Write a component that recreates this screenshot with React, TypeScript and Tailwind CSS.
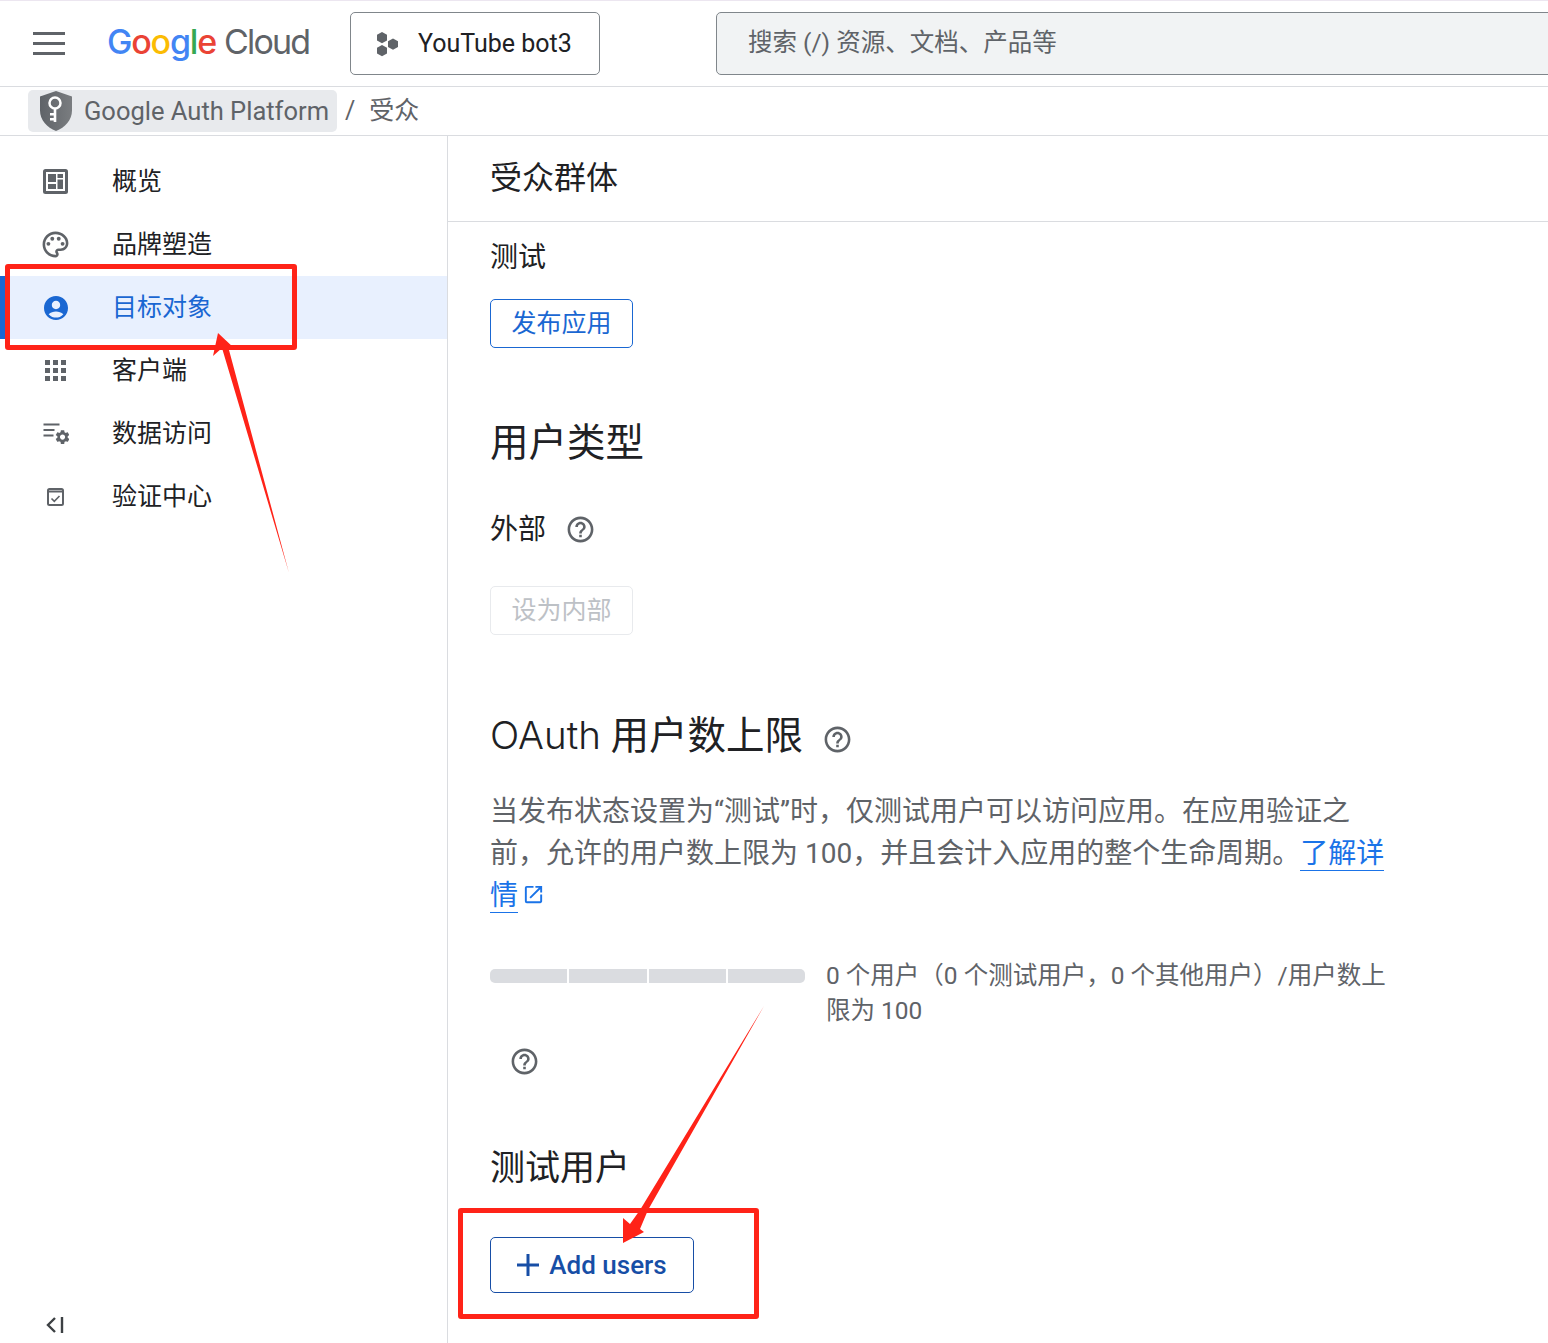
import React from "react";
import { MdHelpOutline, MdOpenInNew } from "react-icons/md";

const font = { zh: "font-['Roboto','Noto_Sans_CJK_SC',sans-serif]" };

const Help = ({ className }: { className: string }) => <MdHelpOutline className={className} />;

const OverviewIcon = () => (
  <svg viewBox="0 0 25 25" className="h-[25px] w-[25px]">
    <rect x="0" y="0" width="25" height="25" rx="2.500" fill="#5f6368" />
    <rect x="3" y="3" width="19" height="19" fill="#fff" />
    <path d="M5 5h8v8H5zM5 15h8v5H5zM14.500 5h5.500v4h-5.500zM14.500 10.500h5.500v9.500h-5.500z" fill="#5f6368" />
  </svg>
);

const PaletteIcon = () => (
  <svg viewBox="0 0 24 24" className="h-[31px] w-[31px]" fill="#5f6368">
    <path d="M12 22C6.49 22 2 17.51 2 12S6.49 2 12 2s10 4.04 10 9c0 3.31-2.69 6-6 6h-1.770c-.28 0-.5.22-.5.5 0 .12.05.23.13.33.41.47.64 1.060.64 1.670 0 1.380-1.120 2.500-2.500 2.500zm0-18c-4.410 0-8 3.590-8 8s3.590 8 8 8c.28 0 .5-.22.5-.5 0-.16-.08-.28-.14-.35-.41-.46-.63-1.050-.63-1.650 0-1.380 1.120-2.500 2.500-2.500H16c2.210 0 4-1.790 4-4 0-3.860-3.590-7-8-7z" />
    <circle cx="6.500" cy="11.500" r="1.500" />
    <circle cx="9.500" cy="7.500" r="1.500" />
    <circle cx="14.500" cy="7.500" r="1.500" />
    <circle cx="17.500" cy="11.500" r="1.500" />
  </svg>
);

const AccountIcon = () => (
  <svg viewBox="2 2 20 20" className="h-[24px] w-[24px]" fill="#1a67d2">
    <path d="M12 2C6.480 2 2 6.480 2 12s4.480 10 10 10 10-4.480 10-10S17.520 2 12 2zm0 4c1.930 0 3.500 1.570 3.500 3.500S13.930 13 12 13s-3.500-1.570-3.500-3.500S10.070 6 12 6zm0 14c-2.030 0-4.430-.82-6.140-2.880C7.550 15.800 9.680 15 12 15s4.450.8 6.140 2.120C16.430 19.180 14.030 20 12 20z" />
  </svg>
);

const AppsIcon = () => (
  <svg viewBox="0 0 21 21" className="h-[21px] w-[21px]" fill="#5f6368">
    <path d="M0 0h5v5H0zM8 0h5v5H8zM16 0h5v5h-5zM0 8h5v5H0zM8 8h5v5H8zM16 8h5v5h-5zM0 16h5v5H0zM8 16h5v5H8zM16 16h5v5h-5z" />
  </svg>
);

const DataAccessIcon = () => (
  <svg viewBox="-1.500 0 27 24" className="h-6 w-[27px]" fill="#5f6368">
    <path d="M0 1.500h16v2H0zM0 7h11v2H0zM0 12.500h10v2H0z" />
    <g transform="translate(10.400 6.400) scale(0.72)">
      <path d="M19.140,12.940c0.040-0.300,0.060-0.610,0.060-0.940c0-0.320-0.020-0.640-0.070-0.940l2.030-1.580c0.180-0.140,0.230-0.410,0.120-0.610l-1.920-3.320c-0.120-0.220-0.370-0.290-0.590-0.220l-2.390,0.960c-0.500-0.380-1.030-0.700-1.620-0.940L14.400,2.810c-0.040-0.240-0.240-0.410-0.480-0.410h-3.840c-0.240,0-0.430,0.170-0.470,0.410L9.250,5.350C8.660,5.590,8.120,5.920,7.630,6.290L5.240,5.330c-0.220-0.080-0.470,0-0.590,0.220L2.740,8.870C2.620,9.080,2.660,9.340,2.860,9.480l2.030,1.580C4.840,11.360,4.800,11.690,4.800,12s0.020,0.640,0.070,0.940l-2.030,1.580c-0.180,0.140-0.230,0.410-0.120,0.610l1.920,3.320c0.120,0.220,0.370,0.290,0.590,0.220l2.390-0.960c0.500,0.380,1.030,0.700,1.620,0.940l0.360,2.540c0.050,0.240,0.240,0.410,0.480,0.410h3.840c0.240,0,0.440-0.170,0.470-0.410l0.360-2.540c0.590-0.240,1.130-0.560,1.620-0.940l2.390,0.960c0.220,0.080,0.470,0,0.590-0.220l1.920-3.320c0.120-0.220,0.070-0.470-0.120-0.610L19.140,12.940z M12,15.600c-1.980,0-3.600-1.620-3.600-3.600s1.620-3.600,3.600-3.600s3.600,1.620,3.600,3.600S13.980,15.600,12,15.600z" />
    </g>
  </svg>
);

const VerifyIcon = () => (
  <svg viewBox="0 0 17 18" className="h-[18px] w-[17px]" fill="none" stroke="#5f6368">
    <rect x="1" y="1" width="15" height="16" rx="1.500" strokeWidth="2" />
    <path d="M1 3.500h15" strokeWidth="2" />
    <path d="M4.500 10.500l2.800 2.800L12.500 8" strokeWidth="1.600" />
  </svg>
);

const navItems = [
  { label: "概览", icon: <OverviewIcon /> },
  { label: "品牌塑造", icon: <PaletteIcon /> },
  { label: "目标对象", icon: <AccountIcon />, active: true },
  { label: "客户端", icon: <AppsIcon /> },
  { label: "数据访问", icon: <DataAccessIcon /> },
  { label: "验证中心", icon: <VerifyIcon /> },
];

const Header = () => (
  <header className="flex h-[87px] items-center overflow-hidden border-t border-b border-t-[#ece6f0] border-b-[#dadce0]">
    <div className="ml-[33px] flex w-[32px] shrink-0 flex-col gap-[7px]">
      <span className="h-[3px] bg-[#5f6368]" />
      <span className="h-[3px] bg-[#5f6368]" />
      <span className="h-[3px] bg-[#5f6368]" />
    </div>
    <div className="ml-[42px] mb-[4px] flex w-[243px] shrink-0 items-baseline font-['Inter',sans-serif] text-[34px] tracking-[-1.200px]">
      <span className="font-medium text-[#4285f4]">G</span>
      <span className="font-medium text-[#ea4335]">o</span>
      <span className="font-medium text-[#fbbc04]">o</span>
      <span className="font-medium text-[#4285f4]">g</span>
      <span className="font-medium text-[#34a853]">l</span>
      <span className="font-medium text-[#ea4335]">e</span>
      <span className="ml-[8px] tracking-[-1.800px] text-[#5f6368]">Cloud</span>
    </div>
    <div className="flex h-[63px] w-[250px] shrink-0 items-center rounded-[5px] border border-[#80868b] pl-[24px]">
      <svg viewBox="0 0 26 26" className="h-[26px] w-[26px]" fill="#5f6368">
        <path d="M7 1l5 2.800v5.600L7 12.200 2 9.400V3.800z" />
        <path d="M7 14l5 2.800v5.600L7 25.200 2 22.400v-5.600z" />
        <path d="M18 7.500l5 2.800v5.600l-5 2.800-5-2.800v-5.600z" />
      </svg>
      <span className={`${font.zh} ml-[17px] text-[25px] text-[#202124]`}>YouTube bot3</span>
    </div>
    <div className="ml-[116px] flex h-[63px] w-[860px] shrink-0 items-center rounded-[5px] border border-[#80868b] bg-[#f1f3f4] pl-[31px]">
      <span className={`${font.zh} text-[24.500px] text-[#5f6368]`}>搜索 (/) 资源、文档、产品等</span>
    </div>
  </header>
);

const Breadcrumb = () => (
  <div className="flex h-[49px] items-center border-b border-[#dadce0] pl-[28px]">
    <div className="flex h-[42px] w-[309px] items-center rounded-[5px] bg-[#e8eaed] pl-[12px]">
      <svg viewBox="0 0 32 40" className="h-[40px] w-[32px] shrink-0">
        <defs>
          <linearGradient id="shield" x1="0" x2="1" y1="0" y2="0">
            <stop offset="0" stopColor="#5f6368" />
            <stop offset="1" stopColor="#7a7d80" />
          </linearGradient>
        </defs>
        <path d="M16 0L32 5.500v14c0 9.500-7 17-16 20.500C7 36.500 0 29 0 19.500v-14z" fill="url(#shield)" />
        <circle cx="15" cy="12" r="5.500" fill="none" stroke="#fff" strokeWidth="2.500" />
        <path d="M13.700 17h2.600v14h-2.600zM10 22h4v2.500h-4zM10 27h4v2.500h-4z" fill="#fff" />
      </svg>
      <span className={`${font.zh} ml-[12px] whitespace-nowrap text-[25.500px] text-[#5f6368]`}>Google Auth Platform</span>
    </div>
    <span className={`${font.zh} ml-[8px] text-[25px] text-[#5f6368]`}>/</span>
    <span className={`${font.zh} ml-[14px] text-[25px] text-[#5f6368]`}>受众</span>
  </div>
);

const Sidebar = () => (
  <aside className="flex w-[448px] shrink-0 flex-col border-r border-[#dadce0] pt-[14px]">
    {navItems.map((item) => (
      <div
        key={item.label}
        className={
          item.active
            ? "flex h-[63px] items-center border-l-[7px] border-[#1a67d2] bg-[#e8f0fe] text-[#1a67d2]"
            : "flex h-[63px] items-center border-l-[7px] border-transparent text-[#202124]"
        }
      >
        <span className="flex w-[97px] justify-center">{item.icon}</span>
        <span className="ml-[8px] text-[25px]">{item.label}</span>
      </div>
    ))}
    <div className="mt-auto flex h-[27px] pl-[46px]">
      <svg viewBox="0 0 18 18" className="h-[18px] w-[18px]" fill="none" stroke="#3c4043" strokeWidth="2.400">
        <path d="M9 2L2 9l7 7M16 1v16" />
      </svg>
    </div>
  </aside>
);

const Main = () => (
  <main className="min-w-0 flex-1">
    <div className="flex h-[86px] items-center border-b border-[#dadce0] pl-[42px] pb-[2px]">
      <h1 className="text-[32px] text-[#202124]">受众群体</h1>
    </div>
    <div className="pl-[42px]">
      <p className="mt-[15px] h-[42px] text-[28px] leading-[42px] text-[#202124]">测试</p>
      <button className="mt-[20px] flex h-[49px] w-[143px] items-center justify-center rounded-[5px] border border-[#1a67d2] text-[25px] text-[#1a67d2]">
        发布应用
      </button>
      <h2 className="mt-[68px] h-[54px] text-[38.500px] leading-[54px] text-[#202124]">用户类型</h2>
      <div className="mt-[38px] flex h-[42px] items-center">
        <span className="mt-[2px] text-[28px] text-[#202124]">外部</span>
        <Help className="ml-[19px] h-[31px] w-[31px] text-[#5f6368]" />
      </div>
      <button className="mt-[36px] flex h-[49px] w-[143px] items-center justify-center rounded-[5px] border border-[#e8eaed] text-[25px] text-[#bdc1c6]">
        设为内部
      </button>
      <div className="mt-[73px] flex h-[54px] items-center">
        <h2 className="whitespace-nowrap text-[38.500px] leading-[54px] text-[#202124]">
          <span className="font-['Inter',sans-serif] font-light">OAuth</span> 用户数上限
        </h2>
        <Help className="ml-[19px] mt-[8px] h-[31px] w-[31px] text-[#5f6368]" />
      </div>
      <p className="mt-[29px] w-[900px] text-[28px] leading-[42px] text-[#5f6368]">
        当发布状态设置为“测试”时，仅测试用户可以访问应用。在应用验证之前，允许的用户数上限为 100，并且会计入应用的整个生命周期。
        <a className="border-b border-[#1a73e8] text-[#1a73e8]">了解详情</a>
        <MdOpenInNew className="ml-[4px] inline h-[23px] w-[23px] align-[-1px] text-[#1a73e8]" />
      </p>
      <div className="mt-[33px] flex">
        <div className="mt-[19px] flex h-[14px] w-[315px] shrink-0 gap-[2px] overflow-hidden rounded-[5px]">
          <span className="flex-1 bg-[#dadce0]" />
          <span className="flex-1 bg-[#dadce0]" />
          <span className="flex-1 bg-[#dadce0]" />
          <span className="flex-1 bg-[#dadce0]" />
        </div>
        <p className="ml-[21px] w-[565px] pt-[8px] text-[24.500px] leading-[35px] text-[#5f6368]">
          0 个用户（0 个测试用户，0 个其他用户）/用户数上限为 100
        </p>
      </div>
      <Help className="ml-[19px] mt-[18px] h-[31px] w-[31px] text-[#5f6368]" />
      <h2 className="mt-[65px] h-[54px] text-[35px] leading-[54px] text-[#202124]">测试用户</h2>
      <button className="mt-[41px] flex h-[56px] w-[204px] items-center justify-center gap-[10px] rounded-[5px] border border-[#174ea6] text-[#174ea6]">
        <svg viewBox="0 0 22 22" className="h-[22px] w-[22px]" fill="#174ea6">
          <path d="M9.500 0h3v9.500H22v3h-9.500V22h-3v-9.500H0v-3h9.500z" />
        </svg>
        <span className="text-[26px] font-medium">Add users</span>
      </button>
    </div>
  </main>
);

// the red marks drawn over the screenshot
const Annotations = () => (
  <>
    <div className="absolute left-[5px] top-[264px] h-[86px] w-[292px] rounded-[3px] border-[5px] border-[#ff2318]" />
    <div className="absolute left-[458px] top-[1208px] h-[111px] w-[301px] rounded-[3px] border-[5px] border-[#ff2318]" />
    <svg className="absolute left-0 top-0 h-[1343px] w-[1548px]" viewBox="0 0 1548 1343" fill="#ff2318">
      <path d="M218 333L234 348L229 350L289 573L222 348L213 356Z" />
      <path d="M764 1006L648 1210L640 1229L644 1232L623 1243L623 1218L630 1224L640 1210Z" />
    </svg>
  </>
);

export default function App() {
  return (
    <div className={`${font.zh} relative h-[1343px] w-[1548px] overflow-hidden bg-white`}>
      <Header />
      <Breadcrumb />
      <div className="flex h-[1207px]">
        <Sidebar />
        <Main />
      </div>
      <Annotations />
    </div>
  );
}
